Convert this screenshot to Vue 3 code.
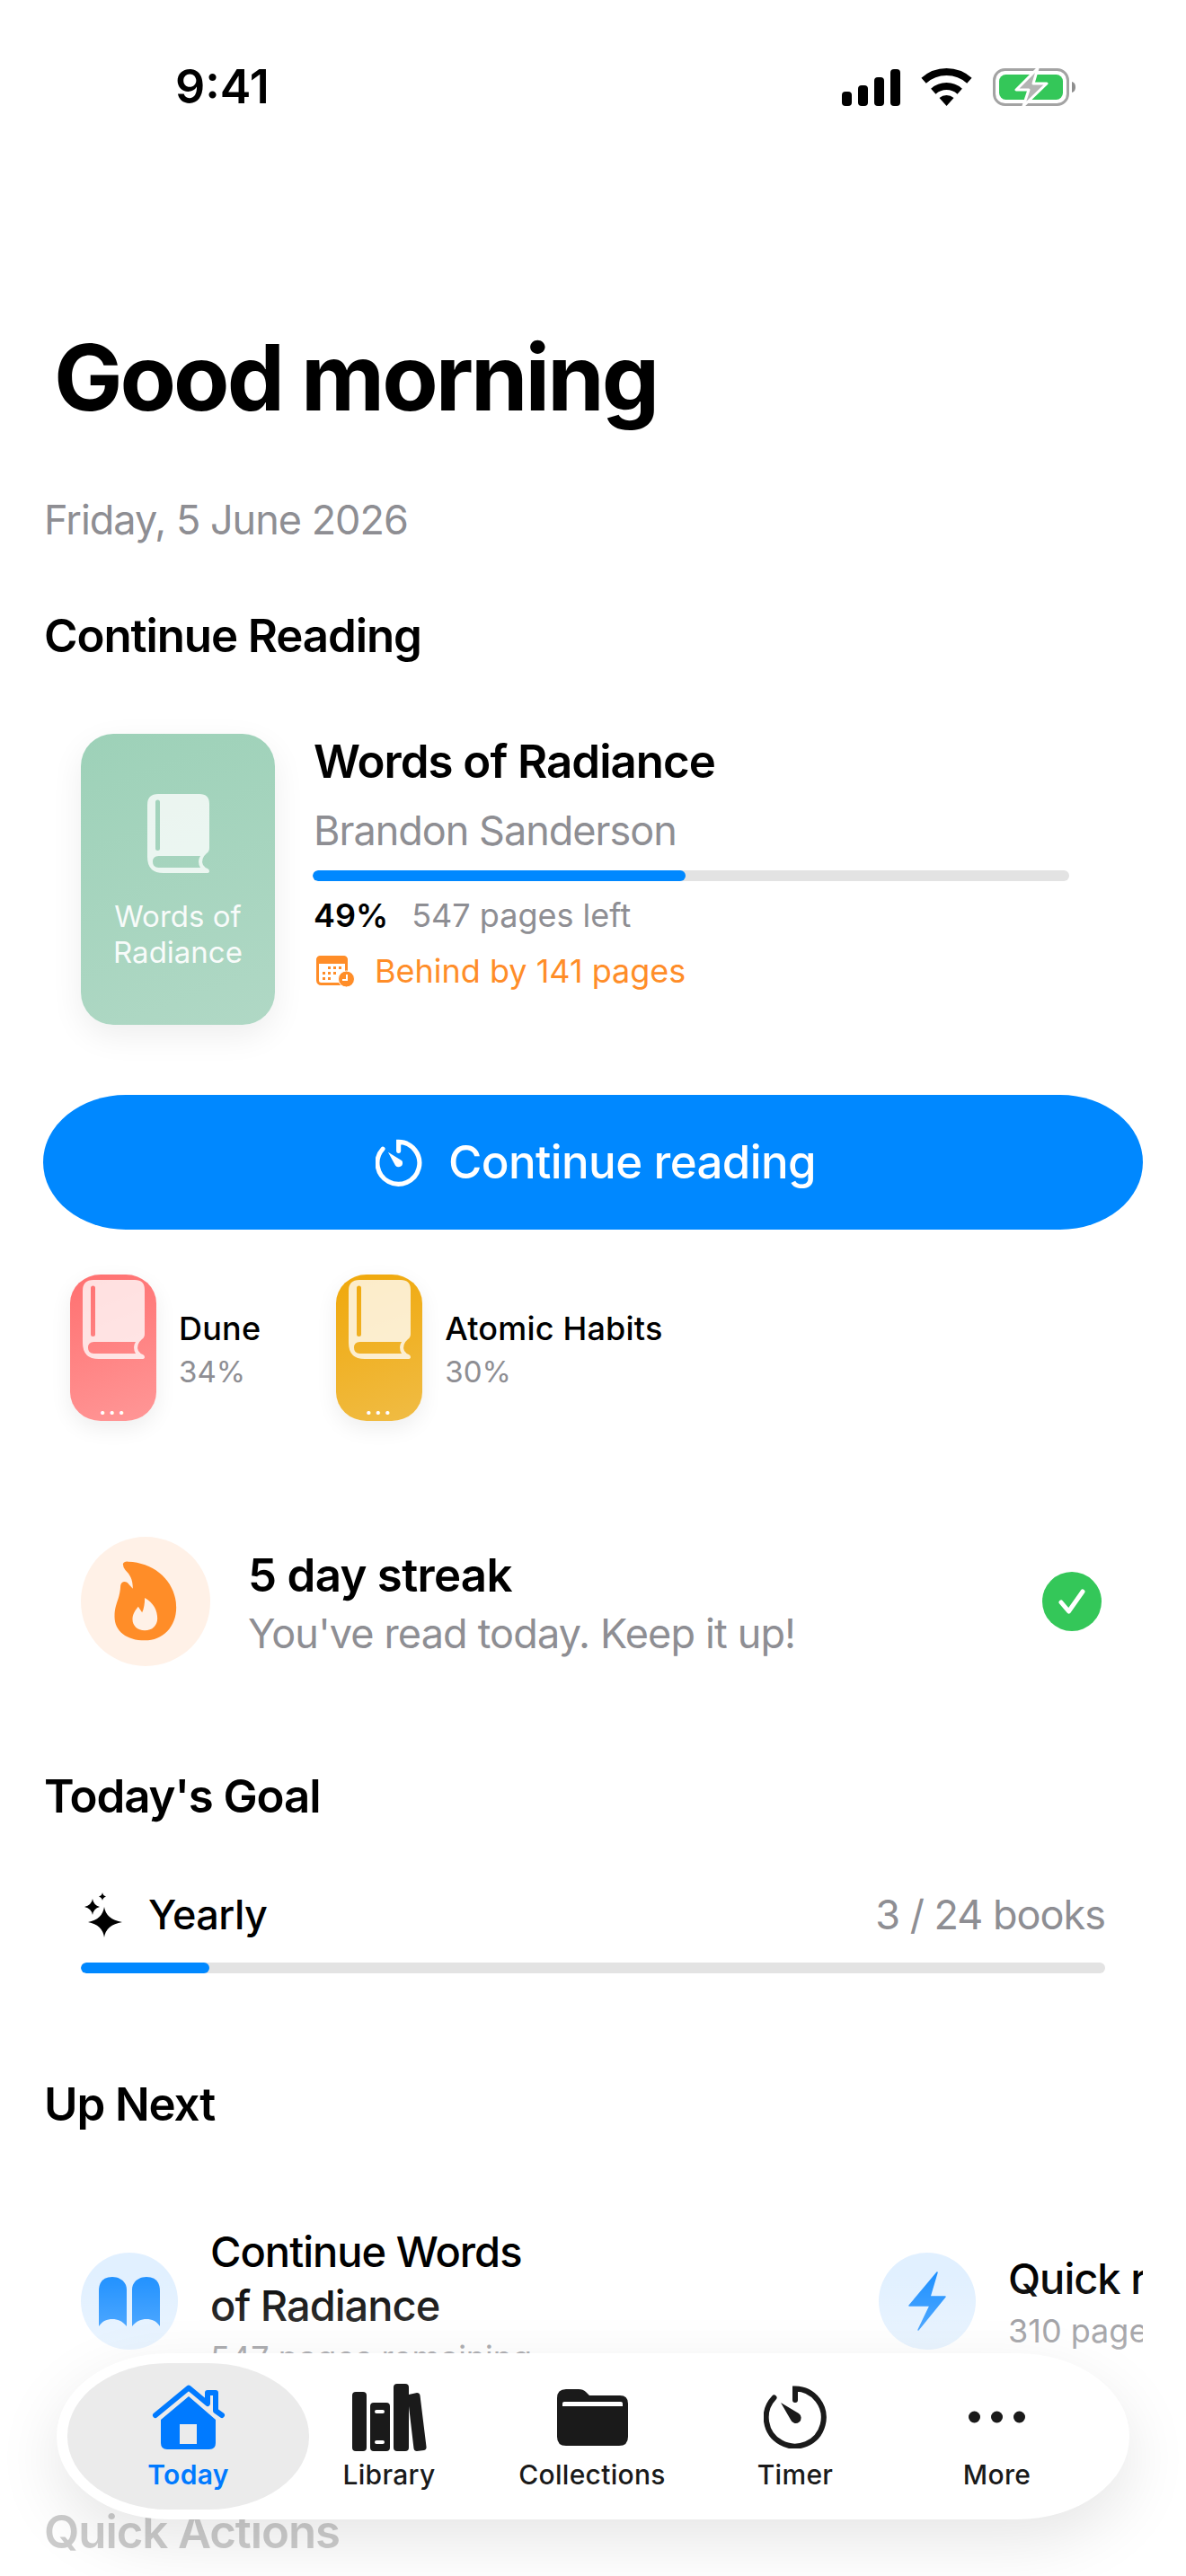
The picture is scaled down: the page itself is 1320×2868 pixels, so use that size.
<script setup>
const bookPath = 'M12 0H58Q69 0 69 11V60Q69 64 66 66Q59 72 62 79Q64 82 67 83Q69 84 69 86Q69 88 66 88H18Q0 88 0 70V12Q0 0 12 0ZM11.5 6.500Q9 6.500 9 9V60.500Q9 63 11.500 63Q14 63 14 60.500V9Q14 6.500 11.500 6.500ZM12.500 69Q6 69 6 75.500Q6 82 12.500 82H59Q55 75 59 69Z'
const shelf = [
  { title: 'Dune', pct: '34%', tone: 'tone-dune' },
  { title: 'Atomic Habits', pct: '30%', tone: 'tone-atomic' }
]
const tabs = [
  { label: 'Today', icon: 'home', active: true },
  { label: 'Library', icon: 'library' },
  { label: 'Collections', icon: 'folder' },
  { label: 'Timer', icon: 'timer' },
  { label: 'More', icon: 'more' }
]
</script>

<template>
  <div class="screen">
    <header class="status">
      <span class="time">9:41</span>
      <div class="status-icons">
        <svg class="signal" width="65" height="41" viewBox="0 0 65 41" fill="#000">
          <rect x="0" y="25" width="11" height="16" rx="4" />
          <rect x="18" y="18" width="11" height="23" rx="4" />
          <rect x="36" y="9" width="11" height="32" rx="4" />
          <rect x="54" y="0" width="11" height="41" rx="4" />
        </svg>
        <svg class="wifi" width="57" height="42" viewBox="0 0 57 42">
          <path d="M3.100 13.800A38 38 0 0 1 53.900 13.800" fill="none" stroke="#000" stroke-width="8" />
          <path d="M13.800 25.700A22 22 0 0 1 43.200 25.700" fill="none" stroke="#000" stroke-width="8" />
          <path d="M28.500 42L20.500 33A12 12 0 0 1 36.500 33Z" fill="#000" />
        </svg>
        <svg class="battery" width="92" height="42" viewBox="0 0 92 42">
          <rect x="1.500" y="1.500" width="82" height="39" rx="12" fill="none" stroke="#a3a3a3" stroke-width="3" />
          <rect x="7" y="7" width="71" height="28" rx="7.500" fill="#34c759" />
          <path d="M88 15Q92 16 92 21Q92 26 88 27Z" fill="#8e8e8e" />
          <path d="M50 0L26 24H40L34 42L60 17H45Z" fill="#b4b4b4" stroke="#fff" stroke-width="3" stroke-linejoin="round" />
        </svg>
      </div>
    </header>

    <h1 class="greeting">Good morning</h1>
    <p class="date">Friday, 5 June 2026</p>

    <h2 class="section-title reading-title">Continue Reading</h2>
    <section class="current">
      <div class="cover">
        <svg width="69" height="88" viewBox="0 0 69 88">
          <path :d="bookPath" fill="#fff" fill-opacity=".78" fill-rule="evenodd" />
        </svg>
        <span class="cover-title">Words of Radiance</span>
      </div>
      <div class="current-info">
        <h3 class="book-title">Words of Radiance</h3>
        <p class="book-author">Brandon Sanderson</p>
        <div class="bar book-bar"><div class="bar-fill book-fill"></div></div>
        <p class="book-stats"><strong>49%</strong><span>547 pages left</span></p>
        <p class="book-behind">
          <svg width="43" height="35" viewBox="0 0 43 35">
            <rect x="1.500" y="1.500" width="32" height="30" rx="4" fill="none" stroke="#ff8d28" stroke-width="3" />
            <path d="M5 0H30Q35 0 35 5V9H0V5Q0 0 5 0Z" fill="#ff8d28" />
            <g fill="#ff8d28">
              <rect x="13" y="12" width="3" height="3" /><rect x="19" y="12" width="3" height="3" /><rect x="25" y="12" width="3" height="3" />
              <rect x="7" y="18" width="3" height="3" /><rect x="13" y="18" width="3" height="3" /><rect x="19" y="18" width="3" height="3" />
              <rect x="7" y="24" width="3" height="3" /><rect x="13" y="24" width="3" height="3" />
            </g>
            <circle cx="33.500" cy="26" r="9" fill="#ff8d28" stroke="#fff" stroke-width="1" />
            <path d="M34 21V27H29" fill="none" stroke="#fff" stroke-width="2" />
          </svg>
          <span>Behind by 141 pages</span>
        </p>
      </div>
    </section>

    <button class="cta">
      <svg width="52" height="55" viewBox="0 0 71 70">
        <path d="M35 17V3.500A32 32 0 1 1 11 14" fill="none" stroke="#fff" stroke-width="7" stroke-linecap="round" />
        <path d="M19 19L40 32A6 6 0 1 1 30 39Z" fill="#fff" />
      </svg>
      <span>Continue reading</span>
    </button>

    <section class="shelf">
      <div v-for="book in shelf" :key="book.title" class="shelf-item">
        <div class="mini-cover" :class="book.tone">
          <svg width="69" height="88" viewBox="0 0 69 88">
            <path :d="bookPath" fill="#fff" fill-opacity=".78" fill-rule="evenodd" />
          </svg>
          <span class="mini-dots">...</span>
        </div>
        <div class="mini-text">
          <span class="mini-title">{{ book.title }}</span>
          <span class="mini-pct">{{ book.pct }}</span>
        </div>
      </div>
    </section>

    <section class="streak">
      <div class="flame">
        <svg width="72" height="90" viewBox="200 180 215 270">
          <path fill="#ff8d28" fill-rule="evenodd" d="M232 190Q236 180 250 182C340 185 410 250 410 335C410 400 365 445 305 445C245 445 204 415 204 365C204 320 222 310 224 262C226 245 245 245 252 258L265 272C265 240 255 225 240 210Q232 200 232 190ZM305 303C335 320 347 345 347 372C347 395 330 412 305 412C280 412 264 395 264 375C264 358 272 345 283 332L296 352C302 340 305 320 305 303Z" />
        </svg>
      </div>
      <div class="streak-text">
        <h3 class="streak-title">5 day streak</h3>
        <p class="streak-sub">You've read today. Keep it up!</p>
      </div>
      <svg class="streak-check" width="66" height="66" viewBox="0 0 66 66">
        <circle cx="33" cy="33" r="33" fill="#34c759" />
        <path d="M21 34L29.500 44L45 22" fill="none" stroke="#fff" stroke-width="5" stroke-linecap="round" stroke-linejoin="round" />
      </svg>
    </section>

    <h2 class="section-title goal-title">Today's Goal</h2>
    <section class="goal">
      <div class="goal-row">
        <svg width="42" height="50" viewBox="0 0 42 50" fill="#000">
          <path d="M22 16Q24 30 42 33Q24 36 22 50Q20 36 4 33Q20 30 22 16Z" />
          <path d="M9 7Q10 14 17 16Q10 18 9 25Q8 18 0 16Q8 14 9 7Z" />
          <path d="M20 0Q20.500 3.500 24 4.500Q20.500 5.500 20 9Q19.500 5.500 16 4.500Q19.500 3.500 20 0Z" />
        </svg>
        <span class="goal-name">Yearly</span>
        <span class="goal-count">3 / 24 books</span>
      </div>
      <div class="bar"><div class="bar-fill goal-fill"></div></div>
    </section>

    <h2 class="section-title next-title">Up Next</h2>
    <section class="next-scroller">
      <div class="next-item">
        <div class="next-icon">
          <svg width="68" height="55" viewBox="0 0 68 55" fill="#1e90ff">
            <path d="M0 16Q0 0 15 0C24 0 31 6 31 14V55C26 49 21 47 15 47C9 47 4 49 0 55Z" />
            <path d="M68 16Q68 0 53 0C44 0 37 6 37 14V55C42 49 47 47 53 47C59 47 64 49 68 55Z" />
          </svg>
        </div>
        <div class="next-text">
          <span class="next-name">Continue Words of Radiance</span>
          <span class="next-sub">547 pages remaining</span>
        </div>
      </div>
      <div class="next-item">
        <div class="next-icon">
          <svg width="42" height="66" viewBox="0 0 42 66">
            <path d="M32 1L1 38H24L11 65L41 28H24Z" fill="#1e90ff" stroke="#1e90ff" stroke-width="1.500" stroke-linejoin="round" />
          </svg>
        </div>
        <div class="next-text">
          <span class="next-name">Quick reads</span>
          <span class="next-sub">310 pages remaining</span>
        </div>
      </div>
    </section>

    <h2 class="section-title actions-title">Quick Actions</h2>

    <div class="fade"></div>

    <nav class="tabbar">
      <div v-for="tab in tabs" :key="tab.label" class="tab" :class="{ active: tab.active }">
        <div class="tab-icon">
          <svg v-if="tab.icon === 'home'" width="82" height="72" viewBox="0 0 82 72" fill="#007aff">
            <path d="M4 34L41 3.500L62 21V9H71V29L78 34" fill="none" stroke="#007aff" stroke-width="6" stroke-linecap="round" stroke-linejoin="round" />
            <path fill-rule="evenodd" d="M41 13L71 39V65Q71 72 64 72H17Q10 72 10 65V39ZM31 44V66H50V44Z" />
          </svg>
          <svg v-else-if="tab.icon === 'library'" width="83" height="75" viewBox="0 0 83 75" fill="#1a1a1a">
            <rect x="0" y="9" width="16" height="66" rx="4" />
            <path fill-rule="evenodd" d="M24 21H38Q42 21 42 25V71Q42 75 38 75H24Q20 75 20 71V25Q20 21 24 21ZM27 29Q25 29 25 31Q25 33 27 33H34Q36 33 36 31Q36 29 34 29ZM27 63Q25 63 25 65Q25 67 27 67H34Q36 67 36 65Q36 63 34 63Z" />
            <rect x="46" y="0" width="17" height="75" rx="4" />
            <path d="M63 12L72 10Q75 10 75.500 13L82.500 70Q83 73 80 74L72 75Q69 75 68.500 72L63 25Z" />
          </svg>
          <svg v-else-if="tab.icon === 'folder'" width="79" height="63" viewBox="0 0 79 63" fill="#1a1a1a">
            <path fill-rule="evenodd" d="M0 10Q0 0 10 0H24Q29 0 32 3L36 7H70Q79 7 79 16V53Q79 63 69 63H10Q0 63 0 53ZM8 14Q6 14 6 16V19H73V16Q73 14 71 14Z" />
          </svg>
          <svg v-else-if="tab.icon === 'timer'" width="71" height="70" viewBox="0 0 71 70">
            <path d="M35 16V3.500A32 32 0 1 1 11.500 13.500" fill="none" stroke="#1a1a1a" stroke-width="6" stroke-linecap="round" />
            <path d="M19 19L39 31A6 6 0 1 1 30 38Z" fill="#1a1a1a" />
          </svg>
          <svg v-else width="63" height="14" viewBox="0 0 63 14" fill="#1a1a1a">
            <circle cx="6.500" cy="7" r="6.500" /><circle cx="31.500" cy="7" r="6.500" /><circle cx="56.500" cy="7" r="6.500" />
          </svg>
        </div>
        <span class="tab-label">{{ tab.label }}</span>
      </div>
    </nav>
  </div>
</template>

<style>
html, body { margin: 0; background: #fff; }
</style>

<style scoped>
.screen {
  position: relative;
  width: 1320px;
  height: 2868px;
  overflow: hidden;
  background: #fff;
  color: #000;
  font-family: Inter, "Noto Sans", sans-serif;
}
h1, h2, h3, p { margin: 0; }

.status {
  display: flex;
  justify-content: space-between;
  align-items: center;
  height: 42px;
  padding: 76px 123px 0 195px;
}
.time { font-size: 52px; font-weight: 600; line-height: 42px; }
.status-icons { display: flex; align-items: center; }
.wifi { margin-left: 23px; }
.battery { margin-left: 23px; }

.greeting {
  margin: 241px 0 0 60px;
  font-size: 102px;
  font-weight: 700;
  line-height: 122px;
  letter-spacing: -3px;
}
.date {
  margin: 71px 0 0 49px;
  font-size: 45px;
  line-height: 54px;
  letter-spacing: -1px;
  color: #8e8e93;
}
.section-title {
  margin-left: 49px;
  font-size: 51px;
  font-weight: 600;
  line-height: 60px;
  letter-spacing: -1.100px;
}
.reading-title { margin-top: 72px; }

.current {
  display: flex;
  gap: 43px;
  margin: 79px 130px 0 90px;
}
.cover {
  flex: 0 0 216px;
  height: 324px;
  box-sizing: border-box;
  padding: 67px 20px 0;
  display: flex;
  flex-direction: column;
  align-items: center;
  border-radius: 36px;
  background: linear-gradient(160deg, #9dd1b8, #b0d8c5);
  box-shadow: 0 12px 36px rgba(0, 0, 0, .07);
  color: #fff;
}
.cover-title {
  margin-top: 28px;
  font-size: 33px;
  line-height: 40px;
  text-align: center;
  opacity: .92;
}
.current-info { flex: 1; min-width: 0; }
.book-title { margin-top: 1px; font-size: 51px; font-weight: 600; line-height: 60px; letter-spacing: -1px; }
.book-author { margin-top: 20px; font-size: 45px; line-height: 54px; letter-spacing: -1px; color: #8e8e93; }
.bar { height: 12px; border-radius: 6px; background: #e3e3e3; overflow: hidden; }
.bar-fill { height: 100%; border-radius: 6px; background: #0088ff; }
.book-bar { margin: 17px 0 0 -1px; }
.book-fill { width: 49.300%; }
.book-stats {
  display: flex;
  gap: 26px;
  margin-top: 16px;
  font-size: 36px;
  line-height: 44px;
  color: #8e8e93;
}
.book-stats strong { color: #000; font-weight: 600; }
.book-behind {
  display: flex;
  align-items: center;
  gap: 22px;
  margin: 18px 0 0 3px;
  font-size: 36px;
  line-height: 44px;
  color: #ff8d28;
}

.cta {
  display: flex;
  align-items: center;
  justify-content: center;
  gap: 29px;
  box-sizing: border-box;
  width: 1224px;
  height: 150px;
  margin: 78px 0 0 48px;
  padding: 0 0 0 6px;
  border: 0;
  border-radius: 92px / 75px;
  background: #0088ff;
  color: #fff;
  font: 500 51px/60px Inter, sans-serif;
  letter-spacing: -.6px;
}

.shelf { display: flex; gap: 84px; margin: 50px 0 0 78px; }
.shelf-item { display: flex; align-items: center; gap: 25px; }
.mini-cover {
  position: relative;
  box-sizing: border-box;
  width: 96px;
  height: 163px;
  padding-top: 6px;
  display: flex;
  justify-content: center;
  border-radius: 34px / 32px;
  box-shadow: 0 8px 24px rgba(0, 0, 0, .07);
}
.tone-dune { background: linear-gradient(160deg, #ff7070, #ff9797); }
.tone-atomic { background: linear-gradient(160deg, #f0a80a, #f0bc45); }
.mini-dots {
  position: absolute;
  left: 0;
  right: 0;
  bottom: 3px;
  text-align: center;
  color: #fff;
  font-size: 24px;
  font-weight: 700;
  line-height: 24px;
  letter-spacing: 2.500px;
}
.mini-text { display: flex; flex-direction: column; margin-top: 3px; }
.mini-title { font-size: 36px; font-weight: 500; line-height: 44px; letter-spacing: .2px; }
.mini-pct { margin-top: 5px; font-size: 33px; line-height: 42px; color: #8e8e93; }

.streak {
  display: flex;
  align-items: center;
  margin: 129px 94px 0 90px;
}
.flame {
  display: flex;
  align-items: center;
  justify-content: center;
  width: 144px;
  height: 144px;
  border-radius: 50%;
  background: #fff1e7;
}
.streak-text { flex: 1; margin: 3px 0 0 42px; }
.streak-title { font-size: 51px; font-weight: 600; line-height: 60px; letter-spacing: -.7px; }
.streak-sub { margin-top: 8px; font-size: 45px; line-height: 54px; letter-spacing: -.85px; color: #8e8e93; }

.goal-title { margin-top: 115px; }
.goal { margin: 74px 90px 0; }
.goal-row { display: flex; align-items: center; margin-left: 4px; }
.goal-name { margin-left: 29px; font-size: 45px; font-weight: 500; line-height: 56px; letter-spacing: -.5px; }
.goal-count { margin-left: auto; font-size: 45px; line-height: 56px; letter-spacing: -1px; color: #8e8e93; }
.goal-fill { width: 12.500%; }
.goal .bar { margin-top: 25px; }

.next-title { margin-top: 116px; }
.next-scroller {
  display: flex;
  gap: 42px;
  margin: 104px 48px 0;
  padding-left: 42px;
  overflow: hidden;
  align-items: center;
}
.next-item { flex: 0 0 846px; display: flex; align-items: center; gap: 36px; }
.next-icon {
  flex: 0 0 108px;
  height: 108px;
  display: flex;
  align-items: center;
  justify-content: center;
  border-radius: 50%;
  background: #e1f0ff;
}
.next-text { display: flex; flex-direction: column; width: 380px; }
.next-name { font-size: 47px; font-weight: 500; line-height: 60px; letter-spacing: -1px; }
.next-sub { margin-top: 6px; font-size: 36px; line-height: 44px; color: #8e8e93; white-space: nowrap; }

.actions-title { margin-top: 142px; }

.fade {
  position: absolute;
  left: 0;
  right: 0;
  top: 2530px;
  bottom: 0;
  background: linear-gradient(rgba(255, 255, 255, 0), rgba(255, 255, 255, .8) 70%);
}

.tabbar {
  position: absolute;
  left: 63px;
  top: 2620px;
  width: 1194px;
  height: 185px;
  box-sizing: border-box;
  padding: 11px 12px;
  display: grid;
  grid-template-columns: 269px 178px 274px 178px 271px;
  border-radius: 125px / 92px;
  background: #fff;
  box-shadow: 0 24px 70px rgba(0, 0, 0, .1);
}
.tab {
  display: flex;
  flex-direction: column;
  align-items: center;
  border-radius: 112px / 81px;
}
.tab.active { background: #ebebeb; }
.tab-icon { height: 80px; margin-top: 20px; display: flex; align-items: center; }
.tab-label {
  margin-top: 6px;
  font-size: 30px;
  font-weight: 500;
  line-height: 36px;
  letter-spacing: .3px;
  color: #1a1a1a;
}
.tab.active .tab-label { color: #007aff; font-weight: 600; }
</style>
